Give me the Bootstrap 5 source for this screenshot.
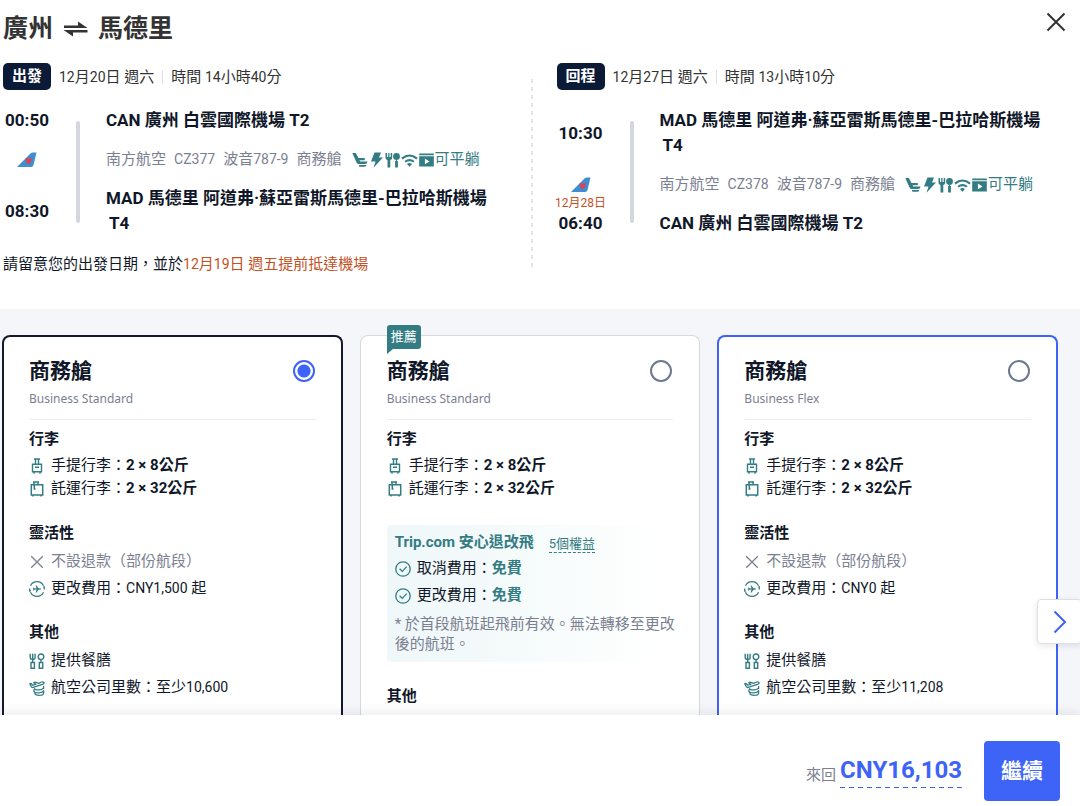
<!DOCTYPE html>
<html lang="zh-Hant">
<head>
<meta charset="utf-8">
<meta name="viewport" content="width=device-width, initial-scale=1">
<title>廣州 ⇌ 馬德里</title>
<link rel="stylesheet" href="https://cdn.jsdelivr.net/npm/bootstrap@5.3.0/dist/css/bootstrap.min.css">
<style>
:root { --ink:#0f1729; --muted:#7b8091; --teal:#337c84; --blue:#3e63f7; --rust:#c4501f; }
body { font-family:Roboto,"Noto Sans CJK TC",sans-serif; font-size:15px; line-height:24px; color:var(--ink); background:#fff; }
svg { display:block; flex:none; }
.ink-teal { color:var(--teal); }
.ink-muted { color:var(--muted); }
.ink-rust { color:var(--rust); }
.num { font-size:14px; }
.route-title { font-size:25px; line-height:36px; font-weight:700; color:#333; gap:10px; margin:0 0 16px; }
.trip-head { padding:11px 3px 32px; min-height:309px; }
.close-btn { top:8px; right:10px; width:28px; height:28px; color:#333; }
.leg-go { padding-right:25px; }
.legs { display:grid; grid-template-columns:minmax(0,529fr) minmax(0,548fr); }
.leg-back { padding-left:26px; }
.leg-back::before { content:""; position:absolute; left:0; top:16px; bottom:-31px; width:2px; background:repeating-linear-gradient(#e1e3e9 0 4px,transparent 4px 8px); }
.leg-tag { background:#0b1a37; color:#fff; font-weight:700; font-size:15px; line-height:27px; width:48px; text-align:center; border-radius:5px; margin-right:8px; }
.leg-date { color:#333; }
.leg-time { border-left:1px solid #dadfe6; line-height:14px; padding-left:8px; margin-left:8px; }
.timeline { display:grid; grid-template-columns:48px 4px minmax(0,1fr); column-gap:25px; row-gap:14px; align-items:center; line-height:25px; margin-top:18px; }
.timeline-bar { grid-column:2; grid-row:1 / 4; align-self:stretch; margin:13px 0; background:#d5d7de; border-radius:2px; }
.clock { grid-column:1; font-size:17px; font-weight:700; text-align:center; }
.clock small { display:block; font-size:12px; line-height:15px; font-weight:400; color:var(--rust); margin:-15px -4px 0; }
.airport { grid-column:3; font-size:17px; font-weight:700; padding-left:1px; }
.airport span { display:block; padding-left:3px; }
.first-stop { grid-row:1; }
.flight-meta { grid-column:3; gap:8px; color:var(--muted); white-space:nowrap; padding-left:1px; }
.amenities { gap:1px; color:var(--teal); margin-left:2px; }
.fares { background:#f5f6fa; flex:1 1 0; min-height:0; }
.fare-grid { display:grid; grid-template-columns:repeat(3,minmax(0,1fr)); gap:17px; padding:26px 22px 0 2px; height:100%; }
.fare { background:#fff; border:1px solid #d6d9e0; border-bottom:0; border-radius:8px 8px 0 0; padding:22px 26px 0; }
.fare-chosen { border:2px solid #121a2b; border-bottom:0; padding:21px 25px 0; }
.fare-hover { border:2px solid var(--blue); border-bottom:0; padding:21px 25px 0; }
.fare-name { font-size:21px; line-height:26px; font-weight:700; }
.fare-brand { font-family:"Noto Sans",sans-serif; font-size:12px; line-height:20px; color:var(--muted); margin-top:5px; }
.fare-head { padding-bottom:10px; border-bottom:1px solid #eceef1; }
.fare-radio { appearance:none; width:22px; height:22px; margin:2px 1px 0 0; border:2px solid #6b7890; border-radius:50%; background:#fff; }
.fare-radio:checked { border-color:var(--blue); background:radial-gradient(circle,var(--blue) 0 6px,#fff 7px); }
.perk-group { margin-bottom:18px; }
.fare-head + .perk-group { margin:7px 0 21px; }
.perk-title { font-size:15px; line-height:24px; font-weight:700; margin:0 0 3px; }
.perk { gap:6px; line-height:27px; }
.perk-tight { line-height:23px; }
.flex-cover { background:linear-gradient(90deg,#eff7f9,#f6fbfb 50%,#fff 92%); border-radius:4px; padding:5px 0 8px 8px; margin:25px -8px 22px 0; }
.cover-title { color:var(--teal); font-weight:700; line-height:25px; gap:15px; }
.cover-link { color:var(--teal); font-size:13px; line-height:17px; font-weight:400; text-decoration:none; border-bottom:1px dashed var(--teal); margin-top:2px; }
.cover-note { line-height:20px; color:var(--muted); margin:5px 0 0; }
.pick-tag { left:26px; top:-11px; background:var(--teal); color:#fff; font-size:13px; line-height:24px; padding:0 4px; border-radius:3px 3px 3px 0; }
.pick-tag::after { content:""; position:absolute; left:0; top:100%; border-top:5px solid var(--teal); border-right:6px solid transparent; }
.next-btn { right:-2px; bottom:71px; width:45px; height:45px; background:#fff; border:1px solid #dcdfe6; border-radius:4px; color:var(--blue); box-shadow:0 2px 6px #0f17291a; }
.pay-bar { background:#fff; padding:26px 20px 5px; box-shadow:0 -3px 10px #0f172914; z-index:2; }
.total { font-size:24px; line-height:31px; font-weight:700; color:var(--blue); text-decoration:none; padding-bottom:2px; background:repeating-linear-gradient(90deg,var(--blue) 0 5px,transparent 5px 9px) bottom / 100% 1px no-repeat; }
.go-btn { background:var(--blue); color:#fff; font-size:21px; line-height:60px; font-weight:700; padding:0 17px; border:0; border-radius:4px; margin-left:22px; }
</style>
</head>
<body>
<svg width="0" height="0" class="position-absolute" aria-hidden="true">
  <symbol id="tail" viewBox="0 0 20 16"><path d="M0 15 13.500 1.500Q14.500.5 16 .5h3.500L16.500 13q-.5 2-2.500 2z" fill="#3f8fd0"/><path d="M8.500 6.500q1.500-1 3 .5 1.500-1.500 3.500-.5l-1 3q-.5 2.500-2.500 2.500T9 9.500z" fill="#d9435c"/></symbol>
  <symbol id="seat" viewBox="0 0 16 16" fill="currentColor"><path d="M.3 1h3.500L6.500 6h6.300v2.200H7.500l.7 1.300h7.300q-.2 2.500-2.500 2.500H7q-1.700 0-2.500-1.500zM7 13h7.500q-.3 1.800-2 1.800H8q-1 0-1-1z"/></symbol>
  <symbol id="bolt" viewBox="0 0 13 16" fill="currentColor"><path d="M4.500.5h6.500L9 5.500h4L3.500 15.800 5.500 9.500H1z"/></symbol>
  <symbol id="meal-solid" viewBox="0 0 15 16" fill="currentColor"><path d="M.5 1H2v4h1.200V1h1.300v4h1.200V1h1.500v4.500q0 2-1.900 2.500v7.500H2.500V8Q.5 7.500.5 5.500z"/><circle cx="11.500" cy="4.400" r="3.400"/><path d="M10.100 9h2.800v6.500h-2.800zM10.900 7h1.200v2h-1.200z"/></symbol>
  <symbol id="wifi" viewBox="0 0 18 16"><path d="M1 6.500q8-6.500 16 0M4.300 9.900q4.700-3.600 9.400 0" fill="none" stroke="currentColor" stroke-width="2.200"/><path d="M6.300 12.300q2.700-2.200 5.400 0L9 15.200z" fill="currentColor"/></symbol>
  <symbol id="screen" viewBox="0 0 16 16"><path d="M.2 1h15.600v1.800H.2zM.2 4h15.600v11H.2zM6.300 6.500v6l4.900-3z" fill="currentColor" fill-rule="evenodd"/></symbol>
  <symbol id="cabin-bag" viewBox="0 0 16 16" fill="none" stroke="currentColor" stroke-width="1.400"><path d="M5 1h6M6.500 1v5M9.500 1v5M3.500 6.200h9v7.500h-9zM6 9.200h4M5 14v1.700M11 14v1.700"/></symbol>
  <symbol id="hold-bag" viewBox="0 0 16 16" fill="none" stroke="currentColor" stroke-width="1.500"><path d="M4 1h6M5 1v3M9 1v3M2.300 3.700h11.400v10.300H2.300zM5.300 4v4h1.200M4 14v1.500M12 14v1.500"/></symbol>
  <symbol id="cross" viewBox="0 0 16 16"><path d="m2.200 2.200 11.600 11.600m0-11.600-11.600 11.600" fill="none" stroke="currentColor" stroke-width="1.300"/></symbol>
  <symbol id="change" viewBox="0 0 16 16" fill="none" stroke="currentColor" stroke-width="1.300"><path d="M1.500 4.800a7.200 7.200 0 0 1 13 0M14.500 11.200a7.200 7.200 0 0 1-13 0M.7 7.500v2.500h1M15.300 8.500V6h-1"/><path d="M4.300 8h7.500" stroke-width="1.300"/><path d="M6.600 4.500h1L10 8l-2.400 3.500h-1L7.700 8zM4 6.500h.8L5.800 8l-1 1.500H4L4.500 8z" fill="currentColor" stroke="none"/></symbol>
  <symbol id="meal" viewBox="0 0 16 16" fill="none" stroke="currentColor" stroke-width="1.400"><path d="M1.200.8v4q0 1.500 1.500 1.500h1.900q1.500 0 1.500-1.500v-4M3.700.8v8.500M2 9.500h3.400v5.800H2zM12 6.500v3M10.300 9.500h3.400v5.800h-3.400z"/><circle cx="12" cy="3.800" r="2.800"/></symbol>
  <symbol id="miles" viewBox="0 0 16 16" fill="none" stroke="currentColor" stroke-width="1.300" stroke-linejoin="round"><path d="M.7 3.800 2.300 6.800q.5.900 1.900.6l9.900-3.300q1.400-.8.800-1.700-.8-.8-2.200-.4L9.600 3.300 6 2.200 4.800 2.700l2.100 1.700-3.200.8-1.600-1.700zM5.500 8.300q0 2 4.700 1.600 5-.7 4.400-3.400v2.600M5.500 9.200Q4 11.500 5.800 12.200q1.200.8 4.400.6 4-.4 4.400-2.200v2.700q-.4 2-4.400 2-4.400 0-4.400-2.500"/></symbol>
  <symbol id="tick" viewBox="0 0 16 16" fill="none" stroke="currentColor" stroke-width="1.300"><circle cx="8" cy="8" r="7.200"/><path d="m4.600 7.800 2.600 2.600 4.500-4.800"/></symbol>
</svg>

<div class="d-flex flex-column vh-100 overflow-hidden">
  <header class="trip-head position-relative">
    <h1 class="route-title d-flex align-items-center">廣州
      <svg width="25" height="16" viewBox="0 0 25 16" aria-label="往返"><path d="M1 4.500h14V.5L24.500 7H1zM24.500 9H.5L10 15.500v-4h14.500z" fill="#333"/></svg>
      馬德里</h1>
    <button type="button" class="close-btn btn p-0 border-0 position-absolute" aria-label="關閉"><svg class="m-auto" width="20" height="20" viewBox="0 0 20 20"><path d="m1.500 1.500 17 17m0-17-17 17" fill="none" stroke="currentColor" stroke-width="2"/></svg></button>

    <div class="legs">
      <section class="leg-go">
        <div class="leg-date d-flex align-items-center"><strong class="leg-tag">出發</strong><span><span class="num">12</span>月<span class="num">20</span>日 週六</span><span class="leg-time">時間 <span class="num">14</span>小時<span class="num">40</span>分</span></div>
        <div class="timeline">
          <div class="timeline-bar"></div>
          <time class="clock first-stop">00:50</time>
          <div class="airport first-stop">CAN 廣州 白雲國際機場 T2</div>
          <svg class="mx-auto" width="20" height="16"><use href="#tail"/></svg>
          <div class="flight-meta d-flex align-items-center"><span>南方航空</span><span class="num">CZ377</span><span>波音<span class="num">787-9</span></span><span>商務艙</span>
            <span class="amenities d-flex align-items-center"><svg width="16" height="16"><use href="#seat"/></svg><svg width="15" height="16"><use href="#bolt"/></svg><svg width="15" height="16"><use href="#meal-solid"/></svg><svg width="17" height="16"><use href="#wifi"/></svg><svg width="15" height="16"><use href="#screen"/></svg>可平躺</span></div>
          <time class="clock">08:30</time>
          <div class="airport">MAD 馬德里 阿道弗·蘇亞雷斯馬德里-巴拉哈斯機場 <span>T4</span></div>
        </div>
      </section>
      <section class="leg-back position-relative">
        <div class="leg-date d-flex align-items-center"><strong class="leg-tag">回程</strong><span><span class="num">12</span>月<span class="num">27</span>日 週六</span><span class="leg-time">時間 <span class="num">13</span>小時<span class="num">10</span>分</span></div>
        <div class="timeline">
          <div class="timeline-bar"></div>
          <time class="clock first-stop">10:30</time>
          <div class="airport first-stop">MAD 馬德里 阿道弗·蘇亞雷斯馬德里-巴拉哈斯機場 <span>T4</span></div>
          <svg class="mx-auto" width="20" height="16"><use href="#tail"/></svg>
          <div class="flight-meta d-flex align-items-center"><span>南方航空</span><span class="num">CZ378</span><span>波音<span class="num">787-9</span></span><span>商務艙</span>
            <span class="amenities d-flex align-items-center"><svg width="16" height="16"><use href="#seat"/></svg><svg width="15" height="16"><use href="#bolt"/></svg><svg width="15" height="16"><use href="#meal-solid"/></svg><svg width="17" height="16"><use href="#wifi"/></svg><svg width="15" height="16"><use href="#screen"/></svg>可平躺</span></div>
          <time class="clock"><small class="text-nowrap">12月28日</small>06:40</time>
          <div class="airport">CAN 廣州 白雲國際機場 T2</div>
        </div>
      </section>
    </div>
    <p class="mb-0 mt-3">請留意您的出發日期，並於<span class="ink-rust"><span class="num">12</span>月<span class="num">19</span>日 週五提前抵達機場</span></p>
  </header>

  <main class="fares position-relative">
    <div class="fare-grid">
      <article class="fare fare-chosen">
        <div class="fare-head d-flex justify-content-between align-items-start"><label for="fare1"><span class="fare-name d-block">商務艙</span><span class="fare-brand d-block">Business Standard</span></label><input class="fare-radio" type="radio" name="fare" id="fare1" checked></div>
        <section class="perk-group"><h2 class="perk-title">行李</h2>
          <div class="perk perk-tight d-flex align-items-center"><svg class="ink-teal" width="16" height="16"><use href="#cabin-bag"/></svg><span>手提行李：<b>2 × 8公斤</b></span></div>
          <div class="perk perk-tight d-flex align-items-center"><svg class="ink-teal" width="16" height="16"><use href="#hold-bag"/></svg><span>託運行李：<b>2 × 32公斤</b></span></div></section>
        <section class="perk-group"><h2 class="perk-title">靈活性</h2>
          <div class="perk ink-muted d-flex align-items-center"><svg width="16" height="16"><use href="#cross"/></svg><span>不設退款（部份航段）</span></div>
          <div class="perk d-flex align-items-center"><svg class="ink-teal" width="16" height="16"><use href="#change"/></svg><span>更改費用：<span class="num">CNY1,500</span> 起</span></div></section>
        <section><h2 class="perk-title">其他</h2>
          <div class="perk d-flex align-items-center"><svg class="ink-teal" width="16" height="16"><use href="#meal"/></svg><span>提供餐膳</span></div>
          <div class="perk d-flex align-items-center"><svg class="ink-teal" width="16" height="16"><use href="#miles"/></svg><span>航空公司里數：至少<span class="num">10,600</span></span></div></section>
      </article>

      <article class="fare position-relative">
        <span class="pick-tag position-absolute">推薦</span>
        <div class="fare-head d-flex justify-content-between align-items-start"><label for="fare2"><span class="fare-name d-block">商務艙</span><span class="fare-brand d-block">Business Standard</span></label><input class="fare-radio" type="radio" name="fare" id="fare2"></div>
        <section class="perk-group"><h2 class="perk-title">行李</h2>
          <div class="perk perk-tight d-flex align-items-center"><svg class="ink-teal" width="16" height="16"><use href="#cabin-bag"/></svg><span>手提行李：<b>2 × 8公斤</b></span></div>
          <div class="perk perk-tight d-flex align-items-center"><svg class="ink-teal" width="16" height="16"><use href="#hold-bag"/></svg><span>託運行李：<b>2 × 32公斤</b></span></div></section>
        <section class="flex-cover">
          <div class="cover-title d-flex align-items-center"><span>Trip.com 安心退改飛</span><a class="cover-link" href="#benefits">5個權益</a></div>
          <div class="perk d-flex align-items-center"><svg class="ink-teal" width="16" height="16"><use href="#tick"/></svg><span>取消費用：<b class="ink-teal">免費</b></span></div>
          <div class="perk d-flex align-items-center"><svg class="ink-teal" width="16" height="16"><use href="#tick"/></svg><span>更改費用：<b class="ink-teal">免費</b></span></div>
          <p class="cover-note">* 於首段航班起飛前有效。無法轉移至更改後的航班。</p>
        </section>
        <h2 class="perk-title">其他</h2>
      </article>

      <article class="fare fare-hover">
        <div class="fare-head d-flex justify-content-between align-items-start"><label for="fare3"><span class="fare-name d-block">商務艙</span><span class="fare-brand d-block">Business Flex</span></label><input class="fare-radio" type="radio" name="fare" id="fare3"></div>
        <section class="perk-group"><h2 class="perk-title">行李</h2>
          <div class="perk perk-tight d-flex align-items-center"><svg class="ink-teal" width="16" height="16"><use href="#cabin-bag"/></svg><span>手提行李：<b>2 × 8公斤</b></span></div>
          <div class="perk perk-tight d-flex align-items-center"><svg class="ink-teal" width="16" height="16"><use href="#hold-bag"/></svg><span>託運行李：<b>2 × 32公斤</b></span></div></section>
        <section class="perk-group"><h2 class="perk-title">靈活性</h2>
          <div class="perk ink-muted d-flex align-items-center"><svg width="16" height="16"><use href="#cross"/></svg><span>不設退款（部份航段）</span></div>
          <div class="perk d-flex align-items-center"><svg class="ink-teal" width="16" height="16"><use href="#change"/></svg><span>更改費用：<span class="num">CNY0</span> 起</span></div></section>
        <section><h2 class="perk-title">其他</h2>
          <div class="perk d-flex align-items-center"><svg class="ink-teal" width="16" height="16"><use href="#meal"/></svg><span>提供餐膳</span></div>
          <div class="perk d-flex align-items-center"><svg class="ink-teal" width="16" height="16"><use href="#miles"/></svg><span>航空公司里數：至少<span class="num">11,208</span></span></div></section>
      </article>
    </div>
    <button type="button" class="next-btn position-absolute p-0" aria-label="下一個"><svg class="m-auto" width="14" height="24" viewBox="0 0 14 24"><path d="m1.500 1.500 10.500 10.500L1.500 22.500" fill="none" stroke="currentColor" stroke-width="2"/></svg></button>
  </main>

  <footer class="pay-bar position-relative d-flex justify-content-end align-items-center">
    <span class="ink-muted me-1 pt-2">來回</span><a class="total" href="#total">CNY16,103</a>
    <button type="button" class="go-btn">繼續</button>
  </footer>
</div>
<script src="https://cdn.jsdelivr.net/npm/bootstrap@5.3.0/dist/js/bootstrap.bundle.min.js"></script>
</body>
</html>
